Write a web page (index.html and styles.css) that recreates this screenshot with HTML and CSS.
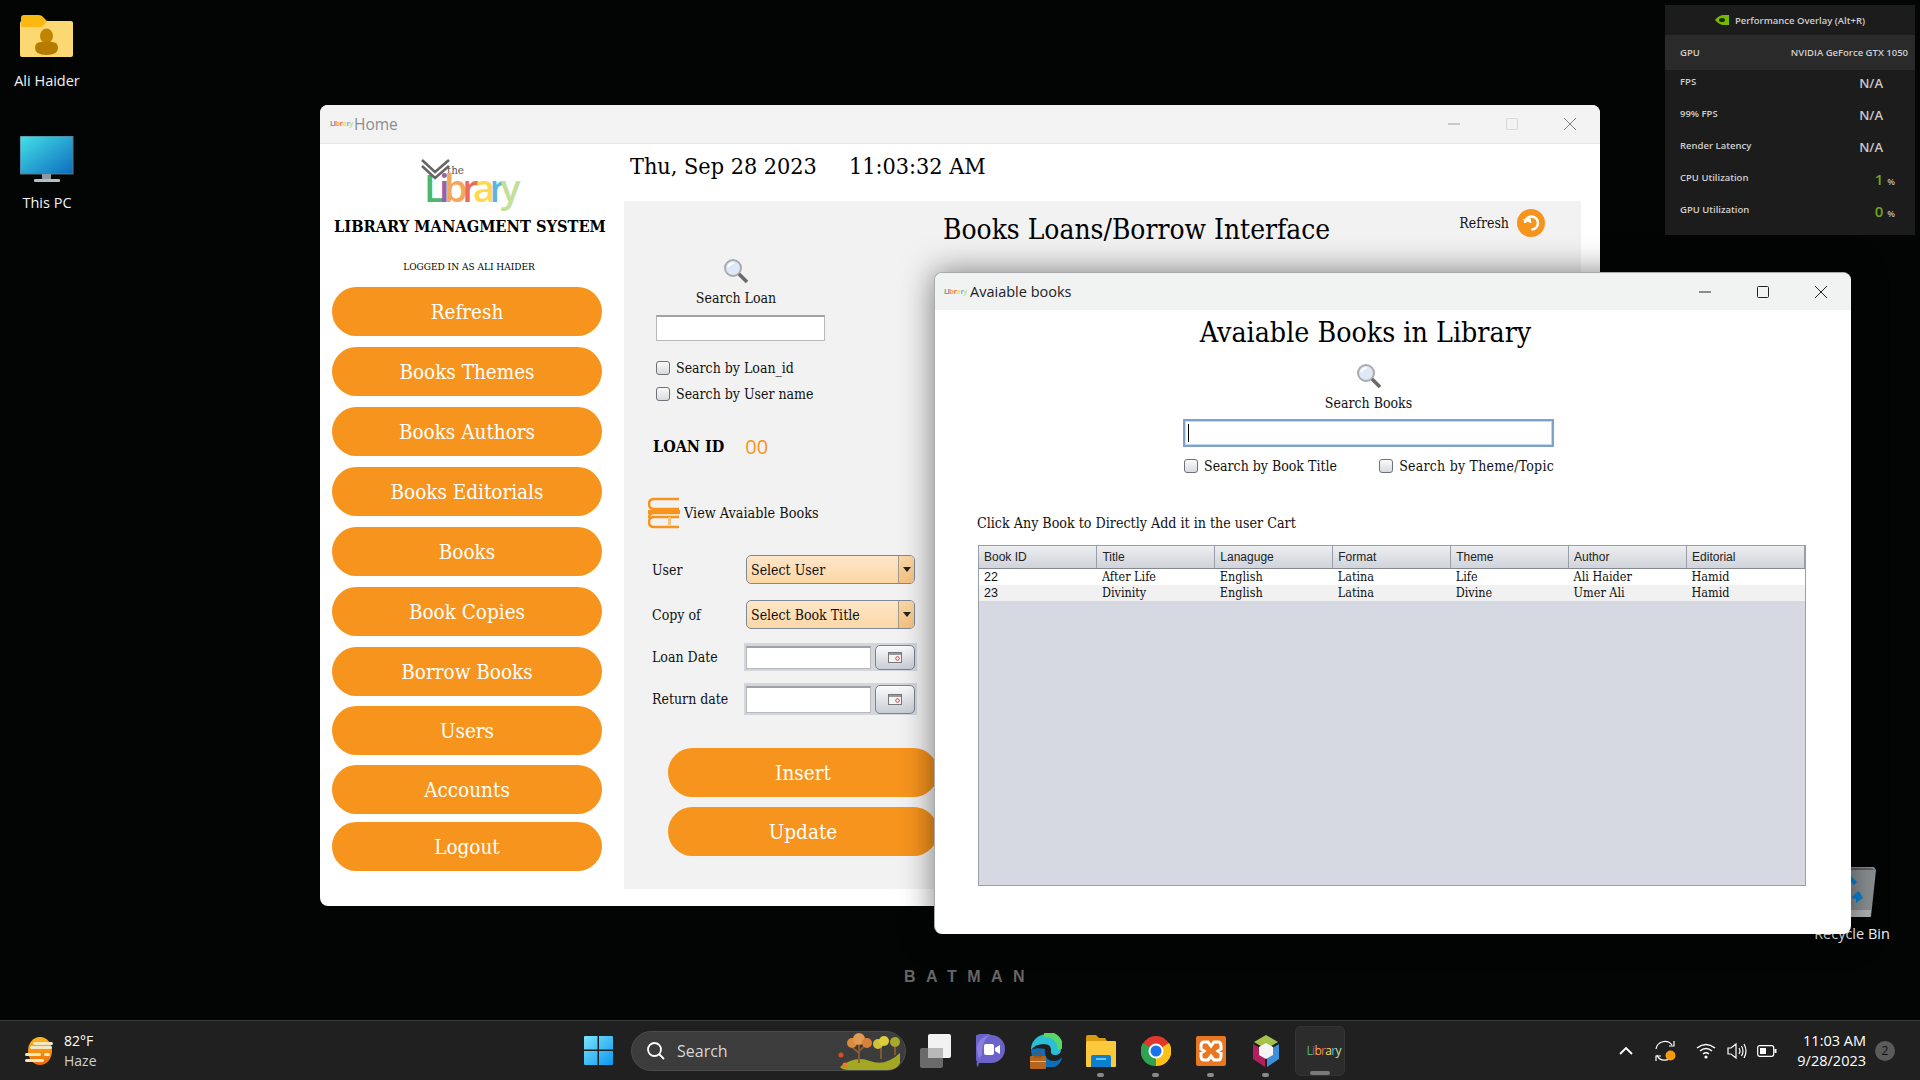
FILE: index.html
```html
<!DOCTYPE html>
<html lang="en">
<head>
<meta charset="utf-8">
<title>Library</title>
<link rel="stylesheet" href="styles.css">
</head>
<body>
<main class="desktop">
  <div class="desk-icon di-user">
    <svg width="54" height="44" viewBox="0 0 54 44"><path d="M1 3q0-3 3-3h15q3 0 5 3l3 3H1z" fill="#f9b90f"/><rect x="0" y="6" width="53" height="36" rx="2" fill="#fcd873"/><path d="M1 6h26l-5 6H1z" fill="#fcb712"/><ellipse cx="26.500" cy="21" rx="6.500" ry="7.500" fill="#c18400"/><path d="M15 33q0-6 6-6h11q6 0 6 6 0 7-11.500 7T15 33z" fill="#b57a00"/></svg>
    <span>Ali Haider</span>
  </div>
  <div class="desk-icon di-pc">
    <svg width="54" height="47" viewBox="0 0 54 47"><defs><linearGradient id="scr" x1="0" y1="0" x2="1" y2="1"><stop offset="0" stop-color="#46e0e8"/><stop offset="1" stop-color="#0b6cbe"/></linearGradient></defs><rect x="0" y="0" width="53" height="38" fill="url(#scr)" stroke="#66727e"/><rect x="22" y="38" width="9" height="6" fill="#8d98a2"/><rect x="14" y="43" width="26" height="3" rx="1" fill="#b6bec5"/></svg>
    <span>This PC</span>
  </div>
  <div class="desk-icon di-bin">
    <svg width="50" height="54" viewBox="0 0 50 54"><path d="M1 3h46l2 3-5 47H6z" fill="#8b9092"/><path d="M6 4h38l5 2H2z" fill="#5a5f62"/><path d="M6 46h38l-1 7H7z" fill="#aeb3b5"/><path d="M18 16l6-4 6 6-3 3-3-3-3 3zM32 27l4 7-7 5v-4l-5-1 5-5z" fill="#0a84d8"/></svg>
    <span>Recycle Bin</span>
  </div>

  <div class="batman">BATMAN</div>

  <section class="window home">
    <header class="titlebar home-bar">
      <span class="mini-logo"><i class="c1">L</i><i class="c2">i</i><i class="c3">b</i><i class="c4">r</i><i class="c5">a</i><i class="c6">r</i><i class="c7">y</i></span>
      <span class="home-title">Home</span>
      <span class="controls dim">
        <svg width="14" height="14" viewBox="0 0 14 14"><path d="M1 7h12" stroke="#a0a0a0"/></svg>
        <svg width="14" height="14" viewBox="0 0 14 14"><rect x="1.500" y="1.500" width="11" height="11" rx="1" fill="none" stroke="#d8d8d8"/></svg>
        <svg width="14" height="14" viewBox="0 0 14 14"><path d="M1 1l12 12M13 1L1 13" stroke="#808080" fill="none"/></svg>
      </span>
    </header>
    <div class="home-body">
      <aside class="sidebar">
        <div class="logo">
          <svg class="logo-book" width="30" height="22" viewBox="0 0 30 22"><path d="M1 2l13 12L28 2M1 8l13 12L28 8" fill="none" stroke="#666" stroke-width="2.500"/></svg>
          <span class="logo-the">the</span>
          <span class="logo-word"><i class="c1">L</i><i class="c2">i</i><i class="c3">b</i><i class="c4">r</i><i class="c5">a</i><i class="c6">r</i><i class="c7">y</i></span>
        </div>
        <h2 class="app-name">LIBRARY MANAGMENT SYSTEM</h2>
        <p class="logged">LOGGED IN AS ALI HAIDER</p>
        <nav class="nav">
          <a class="pill">Refresh</a>
          <a class="pill">Books Themes</a>
          <a class="pill">Books Authors</a>
          <a class="pill">Books Editorials</a>
          <a class="pill">Books</a>
          <a class="pill">Book Copies</a>
          <a class="pill">Borrow Books</a>
          <a class="pill tight">Users</a>
          <a class="pill tight">Accounts</a>
          <a class="pill tighter">Logout</a>
        </nav>
      </aside>
      <div class="main-col">
        <div class="clock-row"><span>Thu, Sep 28 2023</span><span>11:03:32 AM</span></div>
        <div class="panel">
          <div class="panel-head">
            <h1 class="panel-title">Books Loans/Borrow Interface</h1>
            <span class="refresh">Refresh
              <svg width="28" height="28" viewBox="0 0 28 28"><circle cx="14" cy="14" r="14" fill="#f7941d"/><path d="M8 14a6.500 6.500 0 1 1 6.500 6.500" fill="none" stroke="#fff" stroke-width="2.500"/><path d="M5 10h9v5z" fill="#fff" transform="rotate(-8 9 12)"/></svg>
            </span>
          </div>
          <div class="loan-col">
            <div class="search-head">
              <svg width="26" height="26" viewBox="0 0 26 26"><circle cx="10" cy="10" r="8" fill="#dfe8f6" stroke="#a8abb0" stroke-width="2"/><path d="M5 9q2-4 6-4" stroke="#fff" stroke-width="2" fill="none"/><path d="M16 16l8 8" stroke="#6a6a6a" stroke-width="3.500"/></svg>
              <span>Search Loan</span>
            </div>
            <div class="text-input loan-search"></div>
            <label class="check first"><span class="box"></span>Search by Loan_id</label>
            <label class="check next"><span class="box"></span>Search by User name</label>
            <div class="loan-id"><b>LOAN ID</b><span>00</span></div>
            <div class="view-books">
              <svg width="32" height="32" viewBox="0 0 32 32"><path d="M31 2H6q-5 0-5 5t5 5h25M31 12H5M1 21q0-5 5-5h25M31 30H6q-5 0-5-5t5-5h25" fill="none" stroke="#f7941d" stroke-width="2.500"/><rect x="0" y="13" width="32" height="4" fill="#f7941d"/><rect x="20" y="20" width="3" height="8" fill="#f8c27a"/></svg>
              <span>View Avaiable Books</span>
            </div>
            <div class="form">
              <div class="f-row r1">
                <span class="f-label">User</span>
                <div class="select"><span>Select User</span><i class="arrow"></i></div>
              </div>
              <div class="f-row r2">
                <span class="f-label">Copy of</span>
                <div class="select"><span>Select Book Title</span><i class="arrow"></i></div>
              </div>
              <div class="f-row r3">
                <span class="f-label">Loan Date</span>
                <div class="date"><div class="text-input"></div><button class="cal"><svg width="14" height="11" viewBox="0 0 14 11"><rect x=".5" y=".5" width="13" height="10" fill="#f4f4f4" stroke="#777"/><path d="M1 1h12v2H1z" fill="#999"/><circle cx="9.500" cy="6.500" r="1.800" fill="none" stroke="#e04040"/></svg></button></div>
              </div>
              <div class="f-row r4">
                <span class="f-label">Return date</span>
                <div class="date"><div class="text-input"></div><button class="cal"><svg width="14" height="11" viewBox="0 0 14 11"><rect x=".5" y=".5" width="13" height="10" fill="#f4f4f4" stroke="#777"/><path d="M1 1h12v2H1z" fill="#999"/><circle cx="9.500" cy="6.500" r="1.800" fill="none" stroke="#e04040"/></svg></button></div>
              </div>
            </div>
            <a class="pill action first-action">Insert</a>
            <a class="pill action">Update</a>
          </div>
        </div>
      </div>
    </div>
  </section>

  <section class="window avail">
    <header class="titlebar avail-bar">
      <span class="mini-logo"><i class="c1">L</i><i class="c2">i</i><i class="c3">b</i><i class="c4">r</i><i class="c5">a</i><i class="c6">r</i><i class="c7">y</i></span>
      <span class="avail-title">Avaiable books</span>
      <span class="controls">
        <svg width="14" height="14" viewBox="0 0 14 14"><path d="M1 7h12" stroke="#222" stroke-width="1"/></svg>
        <svg width="14" height="14" viewBox="0 0 14 14"><rect x="1.500" y="1.500" width="11" height="11" rx="1" fill="none" stroke="#222"/></svg>
        <svg width="14" height="14" viewBox="0 0 14 14"><path d="M1 1l12 12M13 1L1 13" stroke="#222" fill="none"/></svg>
      </span>
    </header>
    <div class="avail-body">
      <div class="search-col">
        <h1 class="avail-heading">Avaiable Books in Library</h1>
        <svg class="lens" width="26" height="26" viewBox="0 0 26 26"><circle cx="10" cy="10" r="8" fill="#dfe8f6" stroke="#a8abb0" stroke-width="2"/><path d="M5 9q2-4 6-4" stroke="#fff" stroke-width="2" fill="none"/><path d="M16 16l8 8" stroke="#6a6a6a" stroke-width="3.500"/></svg>
        <span class="search-label">Search Books</span>
        <div class="focus-input"><i class="caret"></i></div>
        <div class="check-row">
          <label class="check"><span class="box"></span>Search by Book Title</label>
          <label class="check wide"><span class="box"></span>Search by Theme/Topic</label>
        </div>
      </div>
      <p class="hint">Click Any Book to Directly Add it in the user Cart</p>
      <div class="table-wrap">
        <table class="books">
          <thead><tr><th>Book ID</th><th>Title</th><th>Lanaguge</th><th>Format</th><th>Theme</th><th>Author</th><th>Editorial</th></tr></thead>
          <tbody>
            <tr><td class="num">22</td><td>After Life</td><td>English</td><td>Latina</td><td>Life</td><td>Ali Haider</td><td>Hamid</td></tr>
            <tr class="alt"><td class="num">23</td><td>Divinity</td><td>English</td><td>Latina</td><td>Divine</td><td>Umer Ali</td><td>Hamid</td></tr>
          </tbody>
        </table>
      </div>
    </div>
  </section>

  <aside class="overlay">
    <div class="ov-head">
      <svg width="14" height="10" viewBox="0 0 14 10"><path d="M0 5q4-5 9-5h5v10H9Q4 10 0 5z" fill="#76b900"/><ellipse cx="7" cy="5" rx="3" ry="2" fill="#1c2a06"/></svg>
      <span>Performance Overlay (Alt+R)</span>
    </div>
    <div class="ov-gpu"><span>GPU</span><span>NVIDIA GeForce GTX 1050</span></div>
    <div class="ov-row"><span>FPS</span><b>N/A</b></div>
    <div class="ov-row"><span>99% FPS</span><b>N/A</b></div>
    <div class="ov-row"><span>Render Latency</span><b>N/A</b></div>
    <div class="ov-row"><span>CPU Utilization</span><b class="green">1<small>%</small></b></div>
    <div class="ov-row"><span>GPU Utilization</span><b class="green">0<small>%</small></b></div>
  </aside>

  <footer class="taskbar">
    <div class="weather">
      <svg width="32" height="28" viewBox="0 0 32 28"><defs><linearGradient id="sun" x1="0" y1="0" x2="0" y2="1"><stop offset="0" stop-color="#fcb81c"/><stop offset="1" stop-color="#ec6c08"/></linearGradient></defs><ellipse cx="16" cy="14" rx="12" ry="14" fill="url(#sun)"/><g fill="#f6e6c0"><rect x="9" y="5" width="20" height="3" rx="1.500"/><rect x="6" y="9" width="22" height="3" rx="1.500"/><rect x="1" y="16" width="16" height="3" rx="1.500"/><rect x="20" y="16" width="6" height="3" rx="1.500"/><rect x="1" y="22" width="19" height="3" rx="1.500"/></g></svg>
      <div class="w-text"><span>82°F</span><span class="w-sub">Haze</span></div>
    </div>
    <div class="center">
      <svg class="win" width="29" height="29" viewBox="0 0 29 29"><defs><linearGradient id="w" x1="0" y1="0" x2="1" y2="1"><stop offset="0" stop-color="#7de4fb"/><stop offset="1" stop-color="#0b97f0"/></linearGradient></defs><path d="M0 1q0-1 1-1h12.500v13.500H0zM15 0h13q1 0 1 1v12.500H15zM0 15h13.500v14H1q-1 0-1-1zM15 15h14v13q0 1-1 1H15z" fill="url(#w)"/></svg>
      <div class="search-pill">
        <svg width="20" height="20" viewBox="0 0 20 20"><circle cx="8.500" cy="8.500" r="6.500" fill="none" stroke="#fff" stroke-width="1.800"/><path d="M13 13l5 5" stroke="#fff" stroke-width="1.800"/></svg>
        <span>Search</span>
        <svg class="trees" width="66" height="40" viewBox="0 0 66 40"><path d="M3 36q15-12 30-6t30-8v10q-3 7-12 7H12q-7 0-9-3z" fill="#a2a823"/><path d="M22 32V14M22 22l-7-6M22 20l7-6M44 28V14M58 24V12" stroke="#8a5d34" stroke-width="1.800" fill="none"/><circle cx="15" cy="12" r="5" fill="#d98b3e"/><circle cx="22" cy="8" r="6" fill="#e39a52"/><circle cx="30" cy="12" r="5" fill="#d9803b"/><circle cx="41" cy="13" r="5" fill="#cfc03a"/><circle cx="47" cy="10" r="5" fill="#e0cc3a"/><circle cx="58" cy="11" r="5" fill="#a8a82a"/><circle cx="4" cy="24" r="2.500" fill="#d8501c"/><circle cx="8" cy="34" r="2.500" fill="#e87c2a"/></svg>
      </div>
      <div class="apps">
        <div class="app"><svg width="32" height="34" viewBox="0 0 32 34"><rect x="0" y="14" width="23" height="20" rx="2" fill="#6a6a6a"/><rect x="8" y="0" width="23" height="24" rx="2" fill="#f2f2f2"/><rect x="8" y="14" width="15" height="10" fill="#b8b8b8"/></svg></div>
        <div class="app"><svg width="30" height="34" viewBox="0 0 30 34"><path d="M15 1a14 14 0 0 1 0 28H3l-1 4q-2-1-1-6A14 14 0 0 1 15 1z" fill="#6b63c8"/><path d="M1 16a14 14 0 0 1 14-15c-8 2-9 14-9 20l-3 4z" fill="#8a7ee0"/><rect x="8" y="10" width="10" height="11" rx="2" fill="#fff"/><path d="M19 14l5-3v9l-5-3z" fill="#fff"/></svg></div>
        <div class="app"><svg width="32" height="36" viewBox="0 0 32 36"><path d="M1 17a15 15 0 0 1 30-1q0 6-6 6-5 0-4-5 0-6-7-6-9 0-13 6z" fill="#2bbfd6"/><path d="M31 16q-2-15-17-15" stroke="#58d66a" stroke-width="6" fill="none"/><path d="M1 17q0 12 12 17h12q6-3 7-10-3 4-8 4-10 0-9-12-10-2-14 1z" fill="#0d6fb8"/><rect x="0" y="23" width="16" height="13" rx="1" fill="#b5651d"/><rect x="5" y="20" width="6" height="4" fill="none" stroke="#8a4a12"/><rect x="0" y="28" width="16" height="1" fill="#f2b632"/></svg></div>
        <div class="app dot"><svg width="30" height="32" viewBox="0 0 30 32"><path d="M0 2q0-2 2-2h8l3 3h6l2 3H0z" fill="#d89a0e"/><rect x="0" y="6" width="30" height="26" rx="1" fill="#fcc93c"/><path d="M5 32v-10q0-2 2-2h16q2 0 2 2v10z" fill="#0b7fd0"/><rect x="10" y="23" width="10" height="2" fill="#6cc3f5"/></svg></div>
        <div class="app dot"><svg width="30" height="30" viewBox="0 0 30 30"><circle cx="15" cy="15" r="15" fill="#e3362c"/><path d="M15 15L28 7A15 15 0 0 1 15 30z" fill="#fbc116"/><path d="M15 15v15A15 15 0 0 1 2 7z" fill="#2ea44f"/><circle cx="15" cy="15" r="7.500" fill="#fff"/><circle cx="15" cy="15" r="5.500" fill="#1a73e8"/></svg></div>
        <div class="app dot"><svg width="30" height="30" viewBox="0 0 30 30"><rect width="30" height="30" rx="2" fill="#e87722"/><path d="M8 6h4l3 4 3-4h4q3 0 3 4v3l-3 2 3 2v3q0 4-3 4h-4l-3-4-3 4H8q-3 0-3-4v-3l3-2-3-2v-3q0-4 3-4z" fill="none" stroke="#fff" stroke-width="3"/></svg></div>
        <div class="app dot"><svg width="28" height="32" viewBox="0 0 28 32"><path d="M14 0L2 7l12 7 12-7z" fill="#a5c24c"/><path d="M1 9v15l12 8V16z" fill="#b0205c"/><path d="M27 9v15l-12 8V16z" fill="#3f8fd8"/><path d="M14 8l-7 4v8l7 4 7-4v-8z" fill="#f4f4f4"/></svg></div>
        <div class="app active">
          <span class="mini-logo big"><i class="c1">L</i><i class="c2">i</i><i class="c3">b</i><i class="c4">r</i><i class="c5">a</i><i class="c6">r</i><i class="c7">y</i></span>
        </div>
      </div>
    </div>
    <div class="tray">
      <svg width="16" height="10" viewBox="0 0 16 10"><path d="M2 8l6-6 6 6" fill="none" stroke="#fff" stroke-width="1.800"/></svg>
      <svg width="22" height="22" viewBox="0 0 22 22"><path d="M1 9a9 9 0 0 1 16-4M19 1v5h-5M17 15a8 8 0 0 1-15 0M1 21v-5h5" fill="none" stroke="#fff" stroke-width="1.200"/><circle cx="15.500" cy="15.500" r="5" fill="#f89a0c"/></svg>
      <svg width="20" height="16" viewBox="0 0 20 16"><path d="M1 5q9-7 18 0M4 8q6-5 12 0M7 11q3-2.500 6 0" fill="none" stroke="#fff" stroke-width="1.500"/><circle cx="10" cy="14" r="1.600" fill="#fff"/></svg>
      <svg width="20" height="18" viewBox="0 0 20 18"><path d="M1 6h3l5-4v14l-5-4H1zM12 6q2 3 0 6M14.500 4q3 5 0 10M17 2q4 7 0 14" fill="none" stroke="#fff" stroke-width="1.200"/></svg>
      <svg width="20" height="12" viewBox="0 0 20 12"><rect x=".7" y=".7" width="16" height="10.600" rx="2" fill="none" stroke="#fff" stroke-width="1.200"/><rect x="3" y="3" width="6" height="6" fill="#fff"/><rect x="17.500" y="4" width="2" height="4" fill="#fff"/></svg>
      <div class="time"><span>11:03 AM</span><span>9/28/2023</span></div>
      <span class="badge">2</span>
    </div>
  </footer>
</main>
</body>
</html>
```

FILE: styles.css
```css
* { box-sizing: border-box; }
html, body { margin: 0; height: 100%; overflow: hidden; }
body { background: #030404; font-family: "DejaVu Serif Condensed", "DejaVu Serif", serif; color: #111; }
i { font-style: normal; }

.desktop { position: relative; width: 1920px; height: 1080px; overflow: hidden; }

/* desktop icons sit on a free canvas */
.desk-icon { position: absolute; width: 90px; display: flex; flex-direction: column; align-items: center; color: #f2f2f2; font: 14.500px "Open Sans", sans-serif; }
.desk-icon span { margin-top: 12px; line-height: 20px; }
.di-user { left: 2px; top: 15px; }
.di-pc { left: 2px; top: 136px; }
.di-pc span { margin-top: 10px; }
.di-bin { left: 1807px; top: 864px; }
.di-bin span { margin-top: 6px; }
.batman { position: absolute; left: 904px; top: 968px; color: #666; font: 700 16px "Liberation Sans", sans-serif; letter-spacing: 10.500px; white-space: nowrap; }

/* windows */
.window { position: absolute; background: #fff; display: flex; flex-direction: column; }
.home { left: 320px; top: 105px; width: 1280px; height: 801px; border-radius: 8px; overflow: hidden; }
.avail { left: 934px; top: 272px; width: 917px; height: 662px; border-radius: 8px; border: 1px solid #a9abae; border-width: 1px 0 0 1px; box-shadow: 0 0 32px rgba(0,0,0,.5); overflow: hidden; }
.titlebar { display: flex; align-items: center; flex: none; }
.home-bar { height: 39px; background: #f3f3f3; border-bottom: 1px solid #e8e8e8; padding-left: 10px; }
.avail-bar { height: 37px; background: #f1f3f3; padding-left: 9px; }
.home-title { margin-left: 8px; font: 15.500px "Open Sans", sans-serif; color: #8d8d8d; }
.avail-title { margin-left: 10px; font: 14.500px "Open Sans", sans-serif; color: #222; }
.controls { margin-left: auto; display: flex; gap: 44px; padding-right: 23px; }

.mini-logo { font: 700 7px/10px "Open Sans", sans-serif; letter-spacing: -.3px; display: inline-block; width: 16px; white-space: nowrap; }
.mini-logo.big { font: 400 12px/14px "Open Sans", sans-serif; letter-spacing: -.7px; width: 27px; }
.c1 { color: #4cb66c; } .c2 { color: #9a5fa8; } .c3 { color: #f5a65a; } .c4 { color: #ea6a5e; }
.c5 { color: #fcd94e; } .c6 { color: #5bb4e4; } .c7 { color: #c3e09a; }

.home-body { display: flex; flex: 1; min-height: 0; }
.sidebar { width: 304px; flex: none; padding: 0 0 0 12px; display: flex; flex-direction: column; }
.logo { position: relative; height: 59px; margin-left: 92px; margin-top: 14px; width: 95px; flex: none; }
.logo-book { position: absolute; left: -3px; top: 0; z-index: 1; }
.logo-the { position: absolute; left: 23px; top: 6px; font-size: 11.500px; line-height: 12px; color: #555; }
.logo-word { position: absolute; left: 0; top: 18px; font: 600 38px/22px "Open Sans", sans-serif; letter-spacing: -5.600px; white-space: nowrap; }
.app-name { margin: 0 0 0 2px; width: 271px; text-align: center; font-size: 16.300px; line-height: 20px; font-weight: 700; white-space: nowrap; color: #000; }
.logged { margin: 24px 0 0; width: 274px; text-align: center; font-size: 10px; line-height: 12px; color: #000; }
.nav { display: flex; flex-direction: column; margin-top: 14px; }
.pill { display: flex; align-items: center; justify-content: center; width: 270px; height: 49px; border-radius: 25px; background: #f7941d; color: #fff; font-size: 20.500px; flex: none; }
.nav .pill + .pill { margin-top: 11px; }
.nav .pill.tight { margin-top: 10px; }
.nav .pill.tighter { margin-top: 8px; }

.main-col { flex: 1; padding-right: 19px; display: flex; flex-direction: column; min-width: 0; }
.clock-row { height: 57px; flex: none; display: flex; align-items: center; gap: 32px; padding: 0 0 15px 6px; font-size: 23.200px; color: #000; }
.panel { height: 688px; background: #f2f2f2; }
.panel-head { height: 56px; display: flex; align-items: center; padding: 0 36px 0 319px; }
.panel-title { margin: 0; font-size: 27.900px; font-weight: 400; color: #000; white-space: nowrap; }
.refresh { margin-left: auto; margin-top: -12px; display: flex; align-items: center; gap: 8px; font-size: 14px; }

.loan-col { padding-left: 32px; }
.search-head { width: 160px; display: flex; flex-direction: column; align-items: center; margin-top: 1px; font-size: 14px; line-height: 18px; }
.search-head span { margin-top: 5px; }
.text-input { background: #fff; border: 1px solid #b7b9bd; border-top: 2px solid #a0a2a6; }
.loan-search { width: 169px; height: 26px; margin-top: 8px; }
.check { display: flex; align-items: center; gap: 6px; height: 14px; font-size: 14px; white-space: nowrap; }
.check.first { margin-top: 20px; }
.check.next { margin-top: 12px; }
.check.wide { letter-spacing: .25px; }
.box { width: 14px; height: 14px; flex: none; border: 1px solid #6e7278; border-radius: 3px; background: linear-gradient(#fafafa, #d8dade); }
.loan-id { margin: 33px 0 0 -3px; height: 24px; display: flex; align-items: center; gap: 21px; font-size: 16px; }
.loan-id b { color: #000; font-weight: 700; }
.loan-id span { font: 20px "Open Sans", sans-serif; color: #f7941d; }
.view-books { display: flex; align-items: center; gap: 4px; margin: 39px 0 0 -8px; font-size: 14.300px; }
.form { margin: 26px 0 0 -4px; font-size: 14px; }
.f-row { display: flex; align-items: center; }
.f-label { width: 94px; flex: none; }
.r1, .r2 { height: 29px; }
.r2 { margin-top: 16px; }
.r3 { height: 28px; margin-top: 14px; }
.r4 { height: 32px; margin-top: 12px; }
.select { width: 169px; height: 29px; display: flex; align-items: center; justify-content: space-between; border: 1px solid #7f8a98; border-radius: 5px; background: linear-gradient(#fee6c8, #fcd7a6); padding-left: 4px; font-size: 14px; overflow: hidden; }
.arrow { width: 16px; height: 100%; position: relative; background: linear-gradient(#fbd7a6, #f6c280); border-left: 1px solid #a09a90; }
.arrow::after { content: ""; position: absolute; left: 4px; top: 11px; border: 4px solid transparent; border-top: 5px solid #222; }
.date { margin-left: -2px; width: 173px; height: 100%; display: flex; align-items: center; justify-content: space-between; padding: 0 2px; background: #d3d6dd; }
.date .text-input { width: 125px; height: calc(100% - 5px); }
.cal { width: 40px; height: calc(100% - 3px); padding: 0; display: flex; align-items: center; justify-content: center; border: 1px solid #7c8490; border-radius: 5px; background: linear-gradient(#fcfcfd, #c8ccd4); }
.action { margin-left: 12px; margin-top: 10px; }
.first-action { margin-top: 33px; }

.avail-body { flex: 1; display: flex; flex-direction: column; min-height: 0; }
.search-col { margin-left: 248px; width: 371px; display: flex; flex-direction: column; align-items: center; }
.avail-heading { margin: 0; height: 46px; line-height: 46px; font-size: 28.300px; font-weight: 400; color: #000; white-space: nowrap; transform: translateX(-3px); }
.lens { margin-top: 7px; }
.search-label { margin-top: 5px; font-size: 14px; line-height: 18px; }
.focus-input { width: 371px; height: 28px; margin-top: 7px; flex: none; background: #fff; border: 2px solid #7da2ce; outline: 1px solid #c5d6ea; outline-offset: -3px; display: flex; align-items: center; padding-left: 3px; }
.caret { width: 1px; height: 18px; background: #000; }
.check-row { width: 100%; margin-top: 12px; display: flex; justify-content: space-between; padding-left: 1px; }
.hint { margin: 41px 0 0 42px; font-size: 14.150px; line-height: 18px; color: #111; }
.table-wrap { margin: 13px 0 0 43px; width: 828px; height: 341px; flex: none; background: #d6d9e1; border: 1px solid #9a9ea8; }
.books { width: 100%; table-layout: fixed; border-collapse: collapse; font-size: 12.500px; }
.books th { height: 22px; padding: 0 0 0 5px; text-align: left; font: 400 12px "Liberation Sans", sans-serif; color: #222; background: linear-gradient(#eceef1, #d0d3da); border-right: 1px solid #9a9ea8; border-bottom: 1px solid #84888f; }
.books td { height: 16px; padding: 0 0 0 5px; background: #fff; line-height: 16px; white-space: nowrap; }
.books .alt td { background: #f1f1f2; }
.books .num { font: 12.500px "Liberation Sans", sans-serif; }

/* nvidia overlay */
.overlay { position: absolute; left: 1665px; top: 5px; width: 250px; height: 230px; background: #1c1c1c; color: #cfcfcf; font: 600 9.500px "Open Sans", sans-serif; }
.ov-head { height: 30px; display: flex; align-items: center; justify-content: center; gap: 6px; }
.ov-gpu { height: 35px; background: #2a2a2a; display: flex; align-items: center; justify-content: space-between; padding: 0 7px 0 15px; }
.ov-row { height: 32px; display: flex; justify-content: space-between; padding: 0 32px 0 15px; }
.ov-row span { padding-top: 5px; }
.ov-row b { width: 40px; text-align: right; font: 600 13px/24px "Open Sans", sans-serif; padding-top: 1px; color: #c8c8c8; }
.ov-row .green { color: #6ea51c; font-size: 15px; margin-right: -12px; width: 50px; }
.ov-row small { color: #bbb; font-size: 9px; margin-left: 4px; }

/* taskbar */
.taskbar { position: absolute; left: 0; right: 0; bottom: 0; height: 60px; background: #202020; border-top: 1px solid #3b3b3b; display: flex; align-items: center; color: #fff; font: 14px "Open Sans", sans-serif; }
.weather { display: flex; align-items: center; gap: 8px; padding-left: 24px; width: 584px; flex: none; }
.w-text { display: flex; flex-direction: column; line-height: 20px; }
.w-sub { color: #cfcfcf; }
.center { display: flex; align-items: center; flex: none; }
.search-pill { margin-left: 18px; width: 275px; height: 40px; border-radius: 20px; background: #3c3c3c; border: 1px solid #4c4c4c; display: flex; align-items: center; gap: 11px; padding-left: 14px; font-size: 16px; color: #d6d6d6; position: relative; }
.trees { position: absolute; right: 2px; top: -1px; }
.apps { display: flex; margin-left: 2px; }
.app { width: 55px; height: 50px; display: flex; align-items: center; justify-content: center; position: relative; }
.app.dot::after { content: ""; position: absolute; bottom: -1px; left: 24px; width: 7px; height: 4px; border-radius: 2px; background: #8a8a8a; }
.app.active { width: 50px; margin-left: 2px; background: #2c2c2c; border: 1px solid #343434; border-radius: 6px; }
.app.active::after { content: ""; position: absolute; bottom: 0; left: 14px; width: 20px; height: 4px; border-radius: 2px; background: #7a7a7a; }
.tray { margin-left: auto; display: flex; align-items: center; padding-right: 25px; }
.tray svg:nth-child(1) { margin-right: 21px; }
.tray svg:nth-child(2) { margin-right: 19px; }
.tray svg:nth-child(3) { margin-right: 11px; }
.tray svg:nth-child(4) { margin-right: 10px; }
.time { margin-left: 20px; display: flex; flex-direction: column; align-items: flex-end; line-height: 20px; font-size: 14.500px; }
.badge { margin-left: 9px; width: 20px; height: 20px; border-radius: 50%; background: #5b5b5b; color: #111; display: flex; align-items: center; justify-content: center; font-size: 12px; }
```
